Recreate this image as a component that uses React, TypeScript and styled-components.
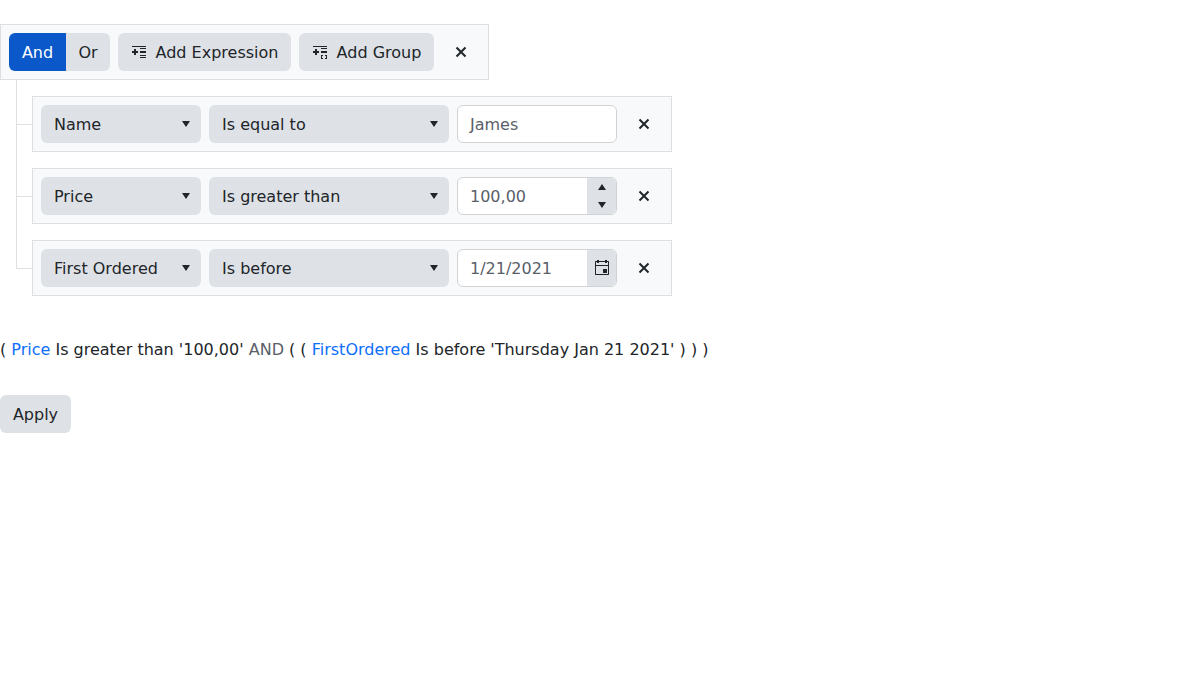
import React from "react";
import styled, { createGlobalStyle } from "styled-components";

const Global = createGlobalStyle`
  *{box-sizing:border-box}
  body{margin:0;background:#fff;color:#212529;font:16px/24px "DejaVu Sans",sans-serif}
  button,input{font:inherit;color:inherit}
`;
const Page = styled.main`padding-top:24px;`;
const Bar = styled.div<{ $w: number }>`
  display:flex;align-items:center;gap:8px;width:${p => p.$w}px;height:56px;padding:8px;
  background:#f8f9fa;border:1px solid #dcdee0;
`;
const Button = styled.button<{ $w?: number }>`
  display:flex;align-items:center;justify-content:center;gap:9px;flex:none;
  width:${p => (p.$w ? p.$w + "px" : "auto")};height:38px;padding:0;border:0;border-radius:6px;
  background:#dee2e6;white-space:nowrap;
`;
const Label = styled.span`padding-top:2px;`;
const Segments = styled.div`display:flex;border-radius:6px;overflow:hidden;`;
const Segment = styled(Button)<{ $active?: boolean }>`
  border-radius:0;background:${p => (p.$active ? "#0a58ca" : "#dee2e6")};color:${p => (p.$active ? "#fff" : "inherit")};
`;
const Close = styled(Button)`background:transparent;`;
const Rows = styled.div`display:flex;flex-direction:column;padding-left:16px;`;
const Branch = styled.div<{ $last?: boolean }>`
  display:grid;grid-template-columns:16px auto;padding-top:16px;
  background:linear-gradient(#dee0e2,#dee0e2) 0 0 / 1px ${p => (p.$last ? "45px" : "100%")} no-repeat;
`;
const Tick = styled.div`height:29px;border-bottom:1px solid #dee0e2;`;
const Select = styled.button<{ $w: number }>`
  display:flex;align-items:center;justify-content:space-between;flex:none;width:${p => p.$w}px;height:38px;
  padding:0 11px 0 13px;border:0;border-radius:6px;background:#dee2e6;
`;
const Field = styled.div`
  display:flex;width:160px;height:38px;flex:none;border:1px solid #d0d3d6;border-radius:6px;background:#fff;overflow:hidden;
`;
const Value = styled.div`flex:1;padding:7px 12px 5px;color:#596068;white-space:nowrap;`;
const Addon = styled.div`
  width:29px;display:flex;flex-direction:column;align-items:center;justify-content:space-around;background:#dee2e6;
`;
const Expression = styled.p`margin:42px 0 0;height:24px;white-space:pre;`;
const FieldName = styled.span`color:#0d6efd;`;
const Operator = styled.span`color:#596068;`;
const Apply = styled(Button)`margin-top:33px;`;

const Caret = ({ up }: { up?: boolean }) => (
  <svg width="8" height="6" viewBox="0 0 8 6" fill="currentColor"><path d={up ? "M0 6 4 0l4 6z" : "M0 0h8L4 6z"} /></svg>
);
const Cross = () => (
  <svg width="16" height="16" viewBox="0 0 16 16" fill="none" stroke="currentColor" strokeWidth="2"><path d="m3.5 3.5 9 9m0-9-9 9" /></svg>
);
const AddIcon = ({ group }: { group?: boolean }) => (
  <svg width="16" height="16" viewBox="0 0 16 16" fill="currentColor">
    <path d="M1 2h14v1H1zM3 5h2v2h2v2H5v2H3V9H1V7h2z" />
    {group
      ? <path d="M9 4h6v1H9zm0 3h6v2H9zm0 4h2v1h-1v2h1v1H9zm4 0h2v4h-2v-1h1v-2h-1z" />
      : <path d="M9 4h6v1H9zm0 3h6v2H9zm0 4h6v1H9zm0 2h6v1H9z" />}
  </svg>
);
const Calendar = () => (
  <svg width="16" height="16" viewBox="0 0 16 16" fill="currentColor">
    <path fillRule="evenodd" d="M3 0h2v1h6V0h2v1h1.5l.5.5v13l-.5.5h-13l-.5-.5v-13l.5-.5H3zM2 2v3h12V2h-1v1h-2V2H5v1H3V2zm0 4v8h12V6zM9 9h4v4H9z" />
  </svg>
);

const filters = [
  { field: "Name", op: "Is equal to", value: "James", addon: null },
  { field: "Price", op: "Is greater than", value: "100,00", addon: <><Caret up /><Caret /></> },
  { field: "First Ordered", op: "Is before", value: "1/21/2021", addon: <Calendar /> },
];

export default function App() {
  return (
    <Page>
      <Global />
      <Bar $w={489}>
        <Segments>
          <Segment $w={57} $active><Label>And</Label></Segment>
          <Segment $w={44}><Label>Or</Label></Segment>
        </Segments>
        <Button $w={173}><AddIcon /><Label>Add Expression</Label></Button>
        <Button $w={135}><AddIcon group /><Label>Add Group</Label></Button>
        <Close $w={38} aria-label="Remove group"><Cross /></Close>
      </Bar>
      <Rows>
        {filters.map((f, i) => (
          <Branch key={f.field} $last={i === filters.length - 1}>
            <Tick />
            <Bar $w={640}>
              <Select $w={160}><Label>{f.field}</Label><Caret /></Select>
              <Select $w={240}><Label>{f.op}</Label><Caret /></Select>
              <Field><Value>{f.value}</Value>{f.addon && <Addon>{f.addon}</Addon>}</Field>
              <Close $w={38} aria-label="Remove filter"><Cross /></Close>
            </Bar>
          </Branch>
        ))}
      </Rows>
      <Expression>
        ( <FieldName>Price</FieldName> Is greater than '100,00' <Operator>AND</Operator> ( ( <FieldName>FirstOrdered</FieldName> Is before 'Thursday Jan 21 2021' ) ) )
      </Expression>
      <Apply $w={71}><Label>Apply</Label></Apply>
    </Page>
  );
}
